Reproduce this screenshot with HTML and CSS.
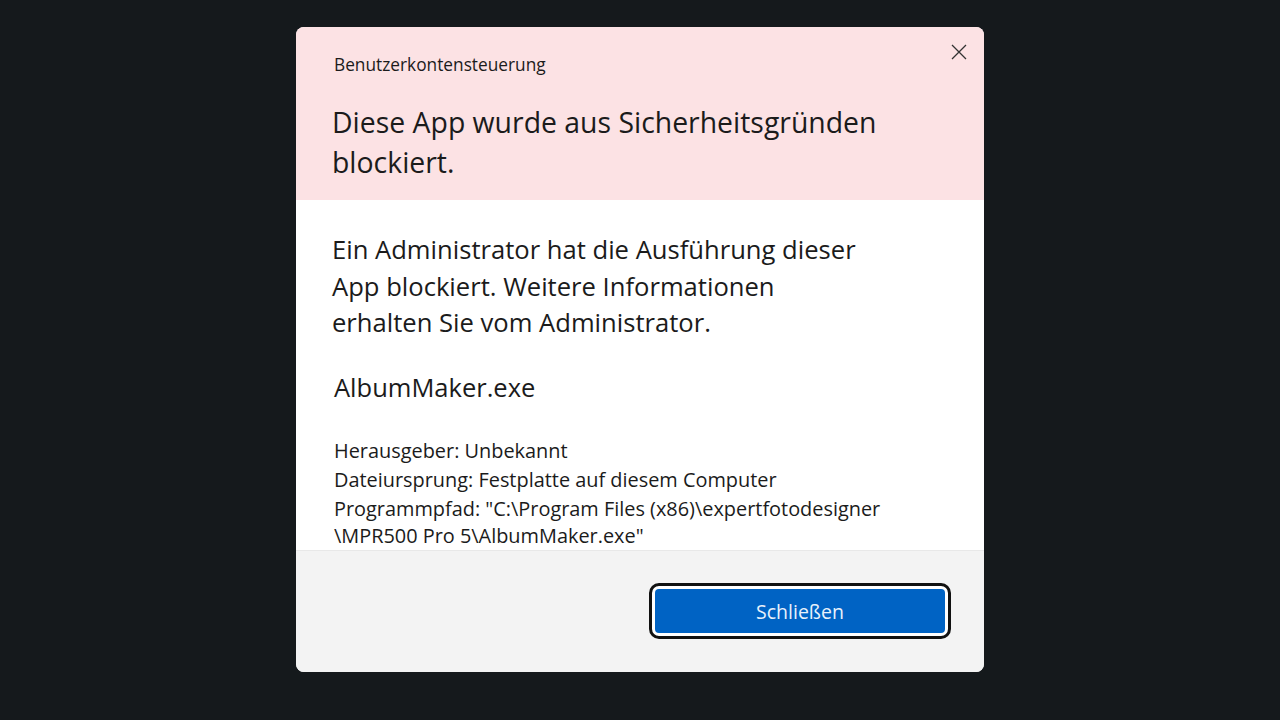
FILE: index.html
```html
<!DOCTYPE html>
<html lang="de">
<head>
<meta charset="utf-8">
<link rel="stylesheet" href="styles.css">
<title>Benutzerkontensteuerung</title>
</head>
<body>
<div class="dialog">
  <div class="head">
    <button class="close" aria-label="Schließen">
      <svg width="16" height="16" viewBox="0 0 16 16"><path d="M1 1 L15 15 M15 1 L1 15" stroke="#333" stroke-width="1.3" fill="none"/></svg>
    </button>
    <p class="caption">Benutzerkontensteuerung</p>
    <h1>Diese App wurde aus Sicherheitsgründen<br>blockiert.</h1>
  </div>
  <div class="main">
    <p class="message">Ein Administrator hat die Ausführung dieser<br>App blockiert. Weitere Informationen<br>erhalten Sie vom Administrator.</p>
    <p class="app">AlbumMaker.exe</p>
    <ul class="details">
      <li>Herausgeber: Unbekannt</li>
      <li>Dateiursprung: Festplatte auf diesem Computer</li>
      <li>Programmpfad: "C:\Program Files (x86)\expertfotodesigner<br>\MPR500 Pro 5\AlbumMaker.exe"</li>
    </ul>
  </div>
  <div class="foot">
    <button class="primary">Schließen</button>
  </div>
</div>
</body>
</html>
```

FILE: styles.css
```css
body {
	margin: 0;
	height: 720px;
	background-color: #15191c;
	font-family: "Open Sans", "Noto Sans", sans-serif;
	color: #1b1b1b;
	overflow: hidden;
}
.dialog {
	width: 688px;
	height: 645px;
	margin: 27px auto 0;
	display: flex;
	flex-direction: column;
	border-radius: 8px;
	overflow: hidden;
	background-color: white;
}
.head {
	position: relative;
	height: 173px;
	box-sizing: border-box;
	padding: 25px 36px 0;
	background-color: #fce2e4;
}
.close {
	position: absolute;
	top: 17px;
	right: 17px;
	border: none;
	background: none;
	padding: 0;
	width: 16px;
	height: 16px;
}
.caption {
	margin: 0 0 0 2px;
	font-size: 17.3px;
	line-height: 26px;
}
h1 {
	margin: 24px 0 0;
	font-size: 28.4px;
	font-weight: normal;
	line-height: 40px;
}
.main {
	flex: 1;
	padding: 32px 36px 0;
}
.message {
	margin: 0;
	font-size: 25.6px;
	line-height: 36.5px;
}
.app {
	margin: 27px 0 0 2px;
	font-size: 25.5px;
	line-height: 36px;
}
.details {
	list-style: none;
	margin: 31px 0 0 2px;
	padding: 0;
	font-size: 19.9px;
	line-height: 29.5px;
}
.details li:last-child {
	line-height: 27px;
}
.foot {
	height: 122px;
	box-sizing: border-box;
	padding: 38px 39px 0 0;
	display: flex;
	justify-content: flex-end;
	align-items: flex-start;
	background-color: #f3f3f3;
	border-top: 1px solid #e8e8e8;
}
.primary {
	width: 290px;
	height: 44px;
	border: none;
	border-radius: 4px;
	background-color: #0063c4;
	color: #e8f1fb;
	font-family: "Open Sans", "Noto Sans", sans-serif;
	font-size: 19.5px;
	outline: 3px solid #111;
	outline-offset: 3px;
	box-shadow: 0 0 0 3px white;
}
```
